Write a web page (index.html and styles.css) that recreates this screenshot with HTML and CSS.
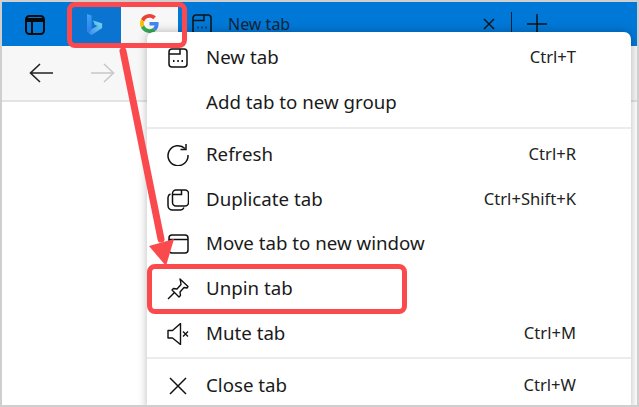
FILE: index.html
```html
<!DOCTYPE html>
<html lang="en">
  <head>
    <meta charset="UTF-8">
    <title>Unpin tab</title>
    <link rel="stylesheet" href="styles.css">
  </head>
  <body>
    <div class="window">
      <div class="tabbar">
        <div class="tab-side">
          <svg width="20" height="20" viewBox="0 0 20 20" fill="none" stroke="#0a0a0a" stroke-width="2"><rect x="1" y="1" width="18" height="18" rx="3.5"/><path d="M1 5h18" stroke-width="4"/><path d="M7 6v13"/></svg>
        </div>
        <div class="tab-pin tab-pin-bing">
          <svg width="16" height="21" viewBox="2 0 16 21.500" preserveAspectRatio="none"><defs><linearGradient id="bingA" x1="0" y1="0" x2="0.6" y2="1"><stop offset="0" stop-color="#3aa6f5"/><stop offset="1" stop-color="#2a6fe4"/></linearGradient><linearGradient id="bingB" x1="0" y1="1" x2="1" y2="0"><stop offset="0" stop-color="#3f86ee"/><stop offset="1" stop-color="#74e2ea"/></linearGradient></defs><path d="M2 0l4.600 1.600v14l6-3.400-2.800-1.300-1.700-4.300 9 3v4.700L6.600 21.500 2 18.500z" fill="url(#bingA)"/><path d="M6.600 15.600l6-3.400-2.800-1.300-1.700-4.300 9 3v4.700L6.600 21.500 4 19.800z" fill="url(#bingB)"/></svg>
        </div>
        <div class="tab-pin tab-pin-active">
          <svg width="19" height="19" viewBox="0 0 48 48"><path fill="#ea4335" d="M24 9.500c3.500 0 6.700 1.200 9.200 3.600l6.900-6.900C35.900 2.400 30.500 0 24 0 14.600 0 6.500 5.400 2.600 13.200l8 6.200C12.500 13.700 17.800 9.500 24 9.500z"/><path fill="#4285f4" d="M47 24.500c0-1.600-.1-3.100-.4-4.500H24v9h12.900c-.6 3-2.200 5.500-4.700 7.200l7.700 6C44.400 38 47 31.800 47 24.500z"/><path fill="#fbbc05" d="M10.500 28.600c-.5-1.500-.8-3-.8-4.600s.3-3.200.8-4.600l-8-6.200C.9 16.500 0 20.100 0 24s.9 7.500 2.600 10.800z"/><path fill="#34a853" d="M24 48c6.500 0 11.900-2.100 15.900-5.800l-7.700-6c-2.200 1.500-4.900 2.300-8.200 2.300-6.200 0-11.500-4.200-13.400-9.900l-8 6.200C6.500 42.600 14.600 48 24 48z"/></svg>
        </div>
        <div class="tab-open">
          <svg width="20" height="21" viewBox="0 0 20 21" fill="none" stroke="#111" stroke-width="1.500"><path d="M4 1h12a3 3 0 0 1 3 3v13a3 3 0 0 1-3 3H4a3 3 0 0 1-3-3V4a3 3 0 0 1 3-3z"/><path d="M1 6.500h11V1"/><path d="M5.500 13.500h1M9.500 13.500h1M13.500 13.500h1" stroke-width="2"/></svg>
          <span class="tab-title">New tab</span>
          <svg class="tab-close" width="12" height="12" viewBox="0 0 12 12" stroke="#111" stroke-width="1.400"><path d="M1 1l10 10M11 1L1 11"/></svg>
        </div>
        <div class="tab-divider"></div>
        <svg class="tab-plus" width="20" height="20" viewBox="0 0 20 20" stroke="#111" stroke-width="1.500"><path d="M0 10h20M10 0v20"/></svg>
      </div>

      <div class="toolbar">
        <svg width="24" height="20" viewBox="0 0 24 20" fill="none" stroke="#222" stroke-width="1.600"><path d="M24 10H1M11 1l-9.500 9 9.500 9"/></svg>
        <svg width="24" height="20" viewBox="0 0 24 20" fill="none" stroke="#c8c8c8" stroke-width="1.600"><path d="M0 10h23M13 1l9.500 9-9.500 9"/></svg>
      </div>
      <div class="content"></div>

      <div class="menu">
        <div class="row">
          <svg class="icon" width="22" height="22" viewBox="0 0 22 22" fill="none" stroke="#111" stroke-width="1.500"><path d="M5 2h12a3 3 0 0 1 3 3v12a3 3 0 0 1-3 3H5a3 3 0 0 1-3-3V5a3 3 0 0 1 3-3z"/><path d="M2 7h11V2"/><path d="M6 14h1.500M10.300 14h1.500M14.500 14h1.500" stroke-width="2"/></svg>
          <span class="label">New tab</span><span class="keys">Ctrl+T</span>
        </div>
        <div class="row">
          <span class="icon"></span>
          <span class="label">Add tab to new group</span>
        </div>
        <div class="sep"></div>
        <div class="row">
          <svg class="icon" width="22" height="22" viewBox="0 0 22 22" fill="none" stroke="#111" stroke-width="1.500"><path d="M18 4.500A10 10 0 1 0 21 11"/><path d="M19 0v5.500h-5.500"/></svg>
          <span class="label">Refresh</span><span class="keys">Ctrl+R</span>
        </div>
        <div class="row">
          <svg class="icon" width="22" height="22" viewBox="0 0 22 22" fill="none" stroke="#111" stroke-width="1.500"><rect x="5.500" y="1" width="16" height="16" rx="3.500"/><path d="M5.500 5.500h9V1"/><path d="M3.500 5A4 4 0 0 0 1 8.500v8A4.500 4.500 0 0 0 5.500 21h8a4 4 0 0 0 3.500-2.500"/></svg>
          <span class="label">Duplicate tab</span><span class="keys">Ctrl+Shift+K</span>
        </div>
        <div class="row">
          <svg class="icon" width="22" height="22" viewBox="0 0 22 22" fill="none" stroke="#111" stroke-width="1.500"><rect x="2" y="2" width="19" height="18" rx="3"/><path d="M2 6.500h19"/></svg>
          <span class="label">Move tab to new window</span>
        </div>
        <div class="row">
          <svg class="icon" width="22" height="22" viewBox="0 0 22 22" fill="none" stroke="#111" stroke-width="1.400" stroke-linejoin="round"><path d="M13 1l8 7.500-1 1.500-3-.5-4 4.500.5 3.500-1.500 1.500-7-7 1.500-1.500 3.500.5 4-4.500L13.500 3z"/><path d="M1 21l6.500-6.500"/></svg>
          <span class="label">Unpin tab</span>
        </div>
        <div class="row">
          <svg class="icon" width="22" height="22" viewBox="0 0 22 22" fill="none" stroke="#111" stroke-width="1.400" stroke-linejoin="round"><path d="M1 7.500h4.500L13.500 0.500v21L5.500 15H1z"/><path d="M16 8.500l5 5M21 8.500l-5 5"/></svg>
          <span class="label">Mute tab</span><span class="keys">Ctrl+M</span>
        </div>
        <div class="sep"></div>
        <div class="row">
          <svg class="icon" width="22" height="22" viewBox="0 0 22 22" fill="none" stroke="#111" stroke-width="1.500"><path d="M3 3l16 16M19 3L3 19"/></svg>
          <span class="label">Close tab</span><span class="keys">Ctrl+W</span>
        </div>
      </div>

      <div class="mark mark-tabs"></div>
      <div class="mark mark-unpin"></div>
      <svg class="arrow" width="70" height="225" viewBox="0 0 70 225">
        <path d="M5 3L43 191" stroke="#fb4a4e" stroke-width="7" stroke-linecap="round"/>
        <path d="M31 198L56 191 48 218z" fill="#fb4a4e"/>
      </svg>
    </div>
  </body>
</html>
```

FILE: styles.css
```css
body {
  margin: 0;
  font-family: "Noto Sans", "Open Sans", sans-serif;
  color: #1a1a1a;
  background: #fff;
}

.window {
  position: relative;
  box-sizing: border-box;
  width: 639px;
  height: 407px;
  border: 2px solid #cfcfcf;
  overflow: hidden;
  display: flex;
  flex-direction: column;
}

.tabbar {
  height: 44px;
  background: #0078d7;
  display: flex;
  align-items: stretch;
  flex-shrink: 0;
}

.tab-side {
  width: 70px;
  box-sizing: border-box;
  padding-left: 23px;
  padding-top: 13px;
}

.tab-pin {
  width: 49px;
  padding-top: 12px;
  box-sizing: border-box;
  text-align: center;
  background: #0a74d0;
}

.tab-pin-bing {
  padding-right: 3px;
}

.tab-pin-active {
  width: 57px;
  background: #f7f7f7;
}

.tab-open {
  width: 333px;
  box-sizing: border-box;
  padding-left: 14px;
  display: flex;
  align-items: center;
  padding-right: 16px;
}

.tab-title {
  margin-left: 16px;
  font-size: 16px;
  color: #10253a;
  flex: 1;
}

.tab-divider {
  width: 1px;
  height: 21px;
  margin-top: 10px;
  background: #123;
}

.tab-plus {
  margin-left: 15px;
  margin-top: 12px;
}

.toolbar {
  height: 54px;
  background: #f7f7f7;
  border-bottom: 2px solid #e3e3e3;
  display: flex;
  align-items: center;
  padding-left: 27px;
  gap: 38px;
  flex-shrink: 0;
}

.content {
  flex: 1;
  background: #fff;
}

.menu {
  position: absolute;
  left: 145px;
  top: 30px;
  width: 484px;
  height: 380px;
  box-sizing: border-box;
  padding-top: 4px;
  background: #fff;
  border-radius: 7px;
  box-shadow: 0 0 10px rgba(0, 0, 0, 0.28);
}

.row {
  height: 44.75px;
  padding: 0 55px 0 20px;
  display: flex;
  align-items: center;
}

.icon {
  width: 22px;
  height: 22px;
  flex-shrink: 0;
}

.label {
  margin-left: 17px;
  font-size: 18.7px;
  line-height: 24px;
  margin-top: -2px;
  flex: 1;
}

.keys {
  font-size: 16.6px;
  line-height: 22px;
  margin-top: -2px;
  color: #222;
}

.sep {
  height: 2px;
  margin: 1px 0 4px;
  background: #ececec;
}

.mark {
  position: absolute;
  box-sizing: border-box;
  border: 5px solid #fb4a4e;
  border-radius: 8px;
}

.mark-tabs {
  left: 65px;
  top: 0;
  width: 120px;
  height: 46px;
}

.mark-unpin {
  left: 145px;
  top: 262px;
  width: 260px;
  height: 50px;
}

.arrow {
  position: absolute;
  left: 116px;
  top: 46px;
}
```
